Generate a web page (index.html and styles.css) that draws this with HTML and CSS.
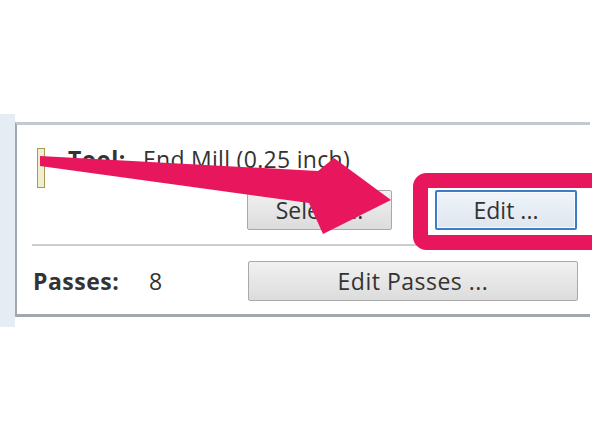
FILE: index.html
```html
<!DOCTYPE html>
<html lang="en">
<head>
  <meta charset="UTF-8">
  <meta name="viewport" content="width=device-width, initial-scale=1.0">
  <title>Tool Settings</title>
  <link rel="stylesheet" href="styles.css">
</head>
<body>
  <div class="frame">
    <div class="group">
      <div class="tool-head">
        <span class="tool-icon"></span>
        <span class="label">Tool:</span>
        <span class="value">End Mill (0.25 inch)</span>
      </div>
      <div class="tool-buttons">
        <button class="btn select-btn">Select ...</button>
        <button class="btn edit-btn">Edit ...</button>
      </div>
      <div class="separator"></div>
      <div class="passes-row">
        <span class="label passes-label">Passes:</span>
        <span class="passes-count">8</span>
        <button class="btn passes-btn">Edit Passes ...</button>
      </div>
    </div>
  </div>

  <!-- callout drawn over the dialog -->
  <svg class="callout" viewBox="0 0 592 444" width="592" height="444">
    <rect x="420.5" y="180.5" width="185" height="62" rx="6" fill="none" stroke="#e8175d" stroke-width="15"/>
    <polygon points="40,156 318,171 334,158 391,200 323,234 309,203 40,166" fill="#e8175d"/>
  </svg>
</body>
</html>
```

FILE: styles.css
```css
body {
  margin: 0;
  position: relative;
  background: #fff;
  font-family: "Open Sans", "Noto Sans", Arial, sans-serif;
  color: #333;
}

.frame {
  margin-top: 114px;
  padding: 8px 2px 10px 15px;
  background: linear-gradient(to right, #e6ecf3 0, #e6ecf3 15px, #fff 15px);
  width: 575px;
}

.group {
  background: #fff;
  border-top: 3px solid #c3c9d2;
  border-left: 2px solid #a2a8b0;
  border-bottom: 3px solid #a2a8b0;
  padding: 0 0 13px 15px;
}

.tool-head {
  display: flex;
  align-items: flex-start;
  padding-top: 23px;
  height: 40px;
}

.tool-icon {
  width: 6px;
  height: 38px;
  margin-left: 5px;
  border: 1px solid #a89a50;
  background: #f2eed2;
}

.label {
  font-weight: bold;
  font-size: 23px;
  letter-spacing: 0.5px;
}

.tool-head .label {
  margin-left: 23px;
  line-height: 24px;
  margin-top: -1px;
}

.value {
  margin-left: 17px;
  font-size: 23px;
  line-height: 24px;
  margin-top: -1px;
  letter-spacing: 0.3px;
}

.tool-buttons {
  display: flex;
  gap: 43px;
  margin-top: 2px;
  padding-left: 215px;
}

.btn {
  height: 40px;
  font-family: inherit;
  font-size: 23px;
  color: #333;
  border: 1px solid #a9a9a9;
  border-radius: 2px;
  background: linear-gradient(#f1f1f1, #dcdcdc);
  padding: 0;
}

.select-btn {
  width: 145px;
}

.edit-btn {
  width: 142px;
  border: 2px solid #3c7dc6;
  background: linear-gradient(#eef4fa, #dfe6ee);
  box-shadow: inset 0 0 0 1px #f8fbff;
}

.separator {
  height: 2px;
  background: #cdcdcd;
  margin-top: 14px;
}

.passes-row {
  display: flex;
  align-items: center;
  margin-top: 15px;
}

.passes-label {
  margin-left: 1px;
  width: 116px;
}

.passes-count {
  font-size: 23px;
  width: 99px;
}

.passes-btn {
  width: 330px;
  letter-spacing: 0.5px;
}

.callout {
  position: absolute;
  left: 0;
  top: 0;
}
```
